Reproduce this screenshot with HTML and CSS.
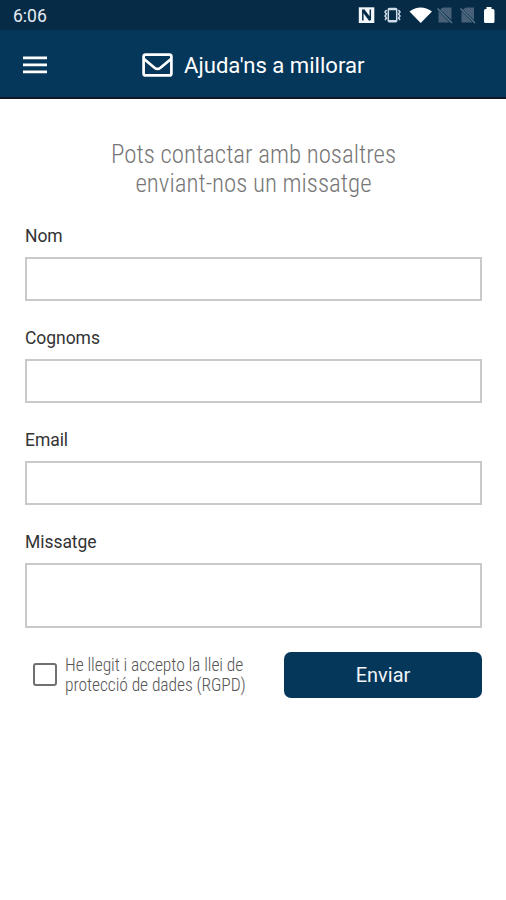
FILE: index.html
```html
<!DOCTYPE html>
<html lang="ca">
<head>
<meta charset="utf-8">
<title>Ajuda'ns a millorar</title>
<link rel="stylesheet" href="styles.css">
</head>
<body>
<div class="status">
  <span class="time">6:06</span>
  <svg class="status-icons" width="138" height="18" viewBox="0 0 138 18">
    <path fill="#f4f7fa" d="M.800 .3H16.300V16H.800z"/>
    <path fill="none" stroke="#052b46" stroke-width="1.500" d="M4.800 13.500V4L11.800 13.500M5.500 2.500L12.300 11.500V2.500"/>
    <g fill="none" stroke="#cfdce8"><rect x="30.300" y="1.500" width="8.400" height="13.200" rx="1" stroke-width="1.500"/><path d="M30 2.500H39M30 13.700H39" stroke-width="1.500"/><path d="M28.500 3L27 5L28.500 7L27 9L28.500 11L27 13M40.500 3L42 5L40.500 7L42 9L40.500 11L42 13" stroke-width="1.500"/></g>
    <path fill="#fff" d="M51.500 4.500Q62.500-3.500 74 4.500L62.700 16z"/>
    <g fill="#486178"><path d="M85 .5H93.500V13L82 2.500zM80.500 4V15.500H91.500z"/><path d="M108 .5H116V13L105 2.500zM103.500 4V15.500H114.500z"/></g>
    <path stroke="#607b92" stroke-width="1.200" d="M79.500 1.500L94 16M102.500 1.500L117 16"/>
    <path fill="#fff" d="M128.500 0H133.500V2H135Q136.500 2 136.500 4V14.500Q136.500 16 135 16H127.500Q126 16 126 14.500V4Q126 2 127.500 2H128.500z"/>
  </svg>
</div>
<header class="bar">
  <svg class="menu" width="24" height="18" viewBox="0 0 24 18"><path fill="#fff" d="M0 .5H24V3.200H0zM0 7.500H24V10.200H0zM0 14.500H24V17.200H0z"/></svg>
  <svg class="mail" width="31" height="24" viewBox="0 0 31 24"><g fill="none" stroke="#fff" stroke-width="2.700"><rect x="1.600" y="1.600" width="27.800" height="20.800" rx="2"/><path d="M2 6L12.500 14.700Q15.500 17.200 18.500 14.700L29 6"/></g></svg>
  <h1 class="title">Ajuda'ns a millorar</h1>
</header>
<main class="page">
  <p class="intro">Pots contactar amb nosaltres<br>enviant-nos un missatge</p>
  <form class="form">
    <div class="field"><label for="nom">Nom</label><input id="nom" type="text"></div>
    <div class="field"><label for="cognoms">Cognoms</label><input id="cognoms" type="text"></div>
    <div class="field"><label for="email">Email</label><input id="email" type="email"></div>
    <div class="field"><label for="missatge">Missatge</label><textarea id="missatge"></textarea></div>
    <div class="actions">
      <input class="check" id="rgpd" type="checkbox">
      <label class="consent" for="rgpd">He llegit i accepto la llei de<br>protecció de dades (RGPD)</label>
      <button class="send" type="button">Enviar</button>
    </div>
  </form>
</main>
</body>
</html>
```
FILE: styles.css
```css
* { box-sizing: border-box; }
body { margin: 0; height: 900px; overflow: hidden; background: #fff; font-family: Roboto, sans-serif; }
.status { height: 30px; padding: 7px 10px 0 13px; display: flex; justify-content: space-between; background: #052b46; color: #e6edf3; }
.time { font-size: 17.5px; line-height: 19px; }
.bar { height: 69px; padding: 2px 0 0 23px; display: flex; align-items: center; background: #05375b; border-bottom: 2px solid #101725; color: #fff; }
.mail { margin-left: 95px; }
.title { margin: 0 0 0 11px; font-size: 22.1px; line-height: 28px; font-weight: 400; white-space: nowrap; }
.page { padding: 41px 24px 0 25px; }
.intro { margin: 0; text-align: center; font-family: "Roboto Condensed", Roboto, sans-serif; font-stretch: 75%; font-weight: 300; font-size: 24.9px; line-height: 29px; color: #777; }
.form { padding-top: 26px; }
.field { display: flex; flex-direction: column; margin-bottom: 25px; }
.field label { height: 33px; line-height: 25px; font-size: 17.5px; letter-spacing: -.05px; color: #333; }
.field input { height: 44px; }
.field textarea { height: 65px; resize: none; }
.field input, .field textarea { width: 457px; margin: 0; padding: 8px; border: 2px solid #c9c9c9; border-radius: 0; background: #fff; outline: 0; }
.actions { display: flex; align-items: center; height: 46px; margin-top: -1px; padding-left: 8px; }
.check { appearance: none; width: 24px; height: 23px; margin: 0 8px 2px 0; border: 2px solid #707070; border-radius: 3px; background: #fff; }
.consent { width: 219px; margin-bottom: 1px; font-family: "Roboto Condensed", Roboto, sans-serif; font-stretch: 75%; font-weight: 300; font-size: 17.5px; letter-spacing: -.08px; line-height: 20px; color: #555; white-space: nowrap; }
.send { width: 198px; height: 46px; flex: none; border: 0; border-radius: 7px; background: #05375b; color: #f0f4f8; font: 400 20px Roboto, sans-serif; }
```
